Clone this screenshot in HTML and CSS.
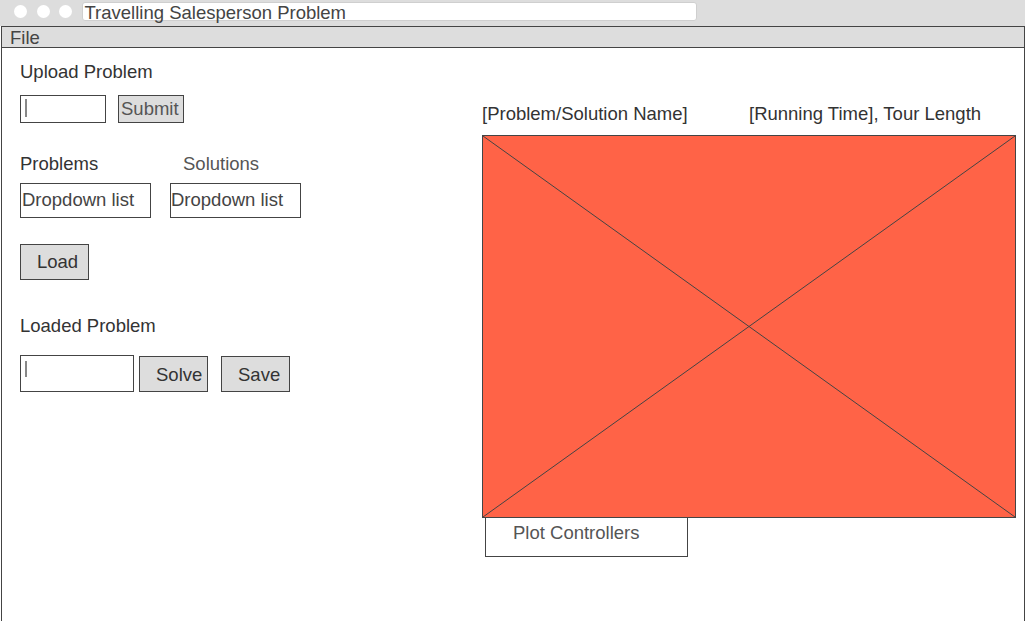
FILE: index.html
```html
<!DOCTYPE html>
<html lang="en">
<head>
<meta charset="utf-8">
<title>Travelling Salesperson Problem</title>
<link rel="stylesheet" href="styles.css">
</head>
<body>
<div class="titlebar">
  <span class="dot"></span>
  <span class="dot"></span>
  <span class="dot"></span>
  <div class="title-field">Travelling Salesperson Problem</div>
</div>
<div class="window">
  <div class="menubar"><span class="menu-item">File</span></div>
  <div class="content">
    <div class="left-panel">
      <div class="label">Upload Problem</div>
      <div class="row upload-row">
        <div class="input input-upload"><span class="caret caret-upload"></span></div>
        <div class="btn btn-submit">Submit</div>
      </div>
      <div class="row labels-row">
        <div class="label label-problems">Problems</div>
        <div class="label label-solutions">Solutions</div>
      </div>
      <div class="row dropdown-row">
        <div class="dropdown dropdown-problems">Dropdown list</div>
        <div class="dropdown dropdown-solutions">Dropdown list</div>
      </div>
      <div class="btn btn-load">Load</div>
      <div class="label label-loaded">Loaded Problem</div>
      <div class="row loaded-row">
        <div class="input input-loaded"><span class="caret caret-loaded"></span></div>
        <div class="btn btn-solve">Solve</div>
        <div class="btn btn-save">Save</div>
      </div>
    </div>
    <div class="right-panel">
      <div class="plot-header">
        <span class="plot-name">[Problem/Solution Name]</span>
        <span class="plot-stats">[Running Time], Tour Length</span>
      </div>
      <div class="plot">
        <svg class="plot-cross" viewBox="0 0 100 100" preserveAspectRatio="none">
          <line x1="0" y1="0" x2="100" y2="100" vector-effect="non-scaling-stroke"/>
          <line x1="100" y1="0" x2="0" y2="100" vector-effect="non-scaling-stroke"/>
        </svg>
      </div>
      <div class="plot-controllers">Plot Controllers</div>
    </div>
  </div>
</div>
</body>
</html>
```

FILE: styles.css
```css
* {
  box-sizing: border-box;
}

html, body {
  margin: 0;
  padding: 0;
  background: #ffffff;
}

body {
  width: 1028px;
  height: 621px;
  overflow: hidden;
  font-family: "Liberation Sans", Arial, sans-serif;
  font-size: 18.5px;
  line-height: 21px;
  color: #333333;
}

.titlebar {
  width: 1025px;
  height: 26px;
  background: #dddddd;
  display: flex;
  align-items: flex-start;
  padding-left: 14px;
}

.dot {
  width: 13px;
  height: 13px;
  border-radius: 50%;
  background: #ffffff;
  margin-top: 5px;
  margin-right: 9.5px;
  flex: none;
}

.title-field {
  margin-top: 2px;
  width: 615px;
  height: 19px;
  background: #ffffff;
  border: 1px solid #cfcfcf;
  border-radius: 3px;
  padding-left: 2px;
  line-height: 19px;
  color: #444444;
  white-space: nowrap;
}

.window {
  margin-left: 1px;
  width: 1024px;
  height: 595px;
  border-left: 1px solid #444444;
  border-right: 1px solid #444444;
  display: flex;
  flex-direction: column;
}

.menubar {
  height: 22px;
  background: #dddddd;
  border-top: 1px solid #444444;
  border-bottom: 1px solid #444444;
  padding-left: 8px;
  color: #444444;
}

.menu-item {
  display: inline-block;
  height: 20px;
  line-height: 21px;
}

.content {
  display: flex;
  flex: 1;
}

.left-panel {
  width: 480px;
  padding-left: 18px;
  padding-top: 13px;
  display: flex;
  flex-direction: column;
  align-items: flex-start;
}

.label {
  color: #333333;
  white-space: nowrap;
}

.row {
  display: flex;
  align-items: flex-start;
}

.upload-row {
  margin-top: 13px;
}

.input {
  border: 1px solid #444444;
  background: #ffffff;
}

.input-upload {
  width: 86px;
  height: 28px;
  padding-left: 4px;
  padding-top: 3px;
}

.caret {
  display: block;
  width: 1.5px;
  background: #888888;
}

.caret-upload {
  height: 18px;
}

.btn {
  background: #dddddd;
  border: 1px solid #444444;
  white-space: nowrap;
  color: #333333;
}

.btn-submit {
  margin-left: 12px;
  width: 66px;
  height: 28px;
  padding-left: 2px;
  padding-top: 2px;
  color: #555555;
}

.labels-row {
  margin-top: 30px;
}

.label-problems {
  width: 163px;
}

.label-solutions {
  color: #555555;
}

.dropdown-row {
  margin-top: 9px;
}

.dropdown {
  width: 131px;
  height: 35px;
  border: 1px solid #444444;
  padding-top: 5px;
  color: #444444;
  white-space: nowrap;
}

.dropdown-problems {
  padding-left: 1px;
}

.dropdown-solutions {
  margin-left: 19px;
  padding-left: 0;
}

.btn-load {
  margin-top: 26px;
  width: 69px;
  height: 36px;
  padding-left: 16px;
  padding-top: 6px;
}

.label-loaded {
  margin-top: 35px;
}

.loaded-row {
  margin-top: 19px;
}

.input-loaded {
  width: 114px;
  height: 37px;
  padding-left: 4px;
  padding-top: 5px;
}

.caret-loaded {
  height: 16px;
}

.btn-solve {
  margin-left: 5px;
  margin-top: 1px;
  width: 69px;
  height: 36px;
  padding-left: 16px;
  padding-top: 7px;
}

.btn-save {
  margin-left: 13px;
  margin-top: 1px;
  width: 69px;
  height: 36px;
  padding-left: 16px;
  padding-top: 7px;
}

.right-panel {
  display: flex;
  flex-direction: column;
  align-items: flex-start;
  padding-top: 55px;
}

.plot-header {
  display: flex;
  white-space: nowrap;
  color: #333333;
}

.plot-name {
  width: 267px;
}

.plot {
  margin-top: 11px;
  width: 534px;
  height: 383px;
  background: #ff6347;
  border: 1px solid #444444;
}

.plot-cross {
  display: block;
  width: 100%;
  height: 100%;
}

.plot-cross line {
  stroke: #444444;
  stroke-width: 1;
}

.plot-controllers {
  margin-top: -1px;
  margin-left: 3px;
  width: 203px;
  height: 40px;
  border: 1px solid #444444;
  padding-left: 27px;
  padding-top: 4px;
  color: #555555;
  white-space: nowrap;
}
```
